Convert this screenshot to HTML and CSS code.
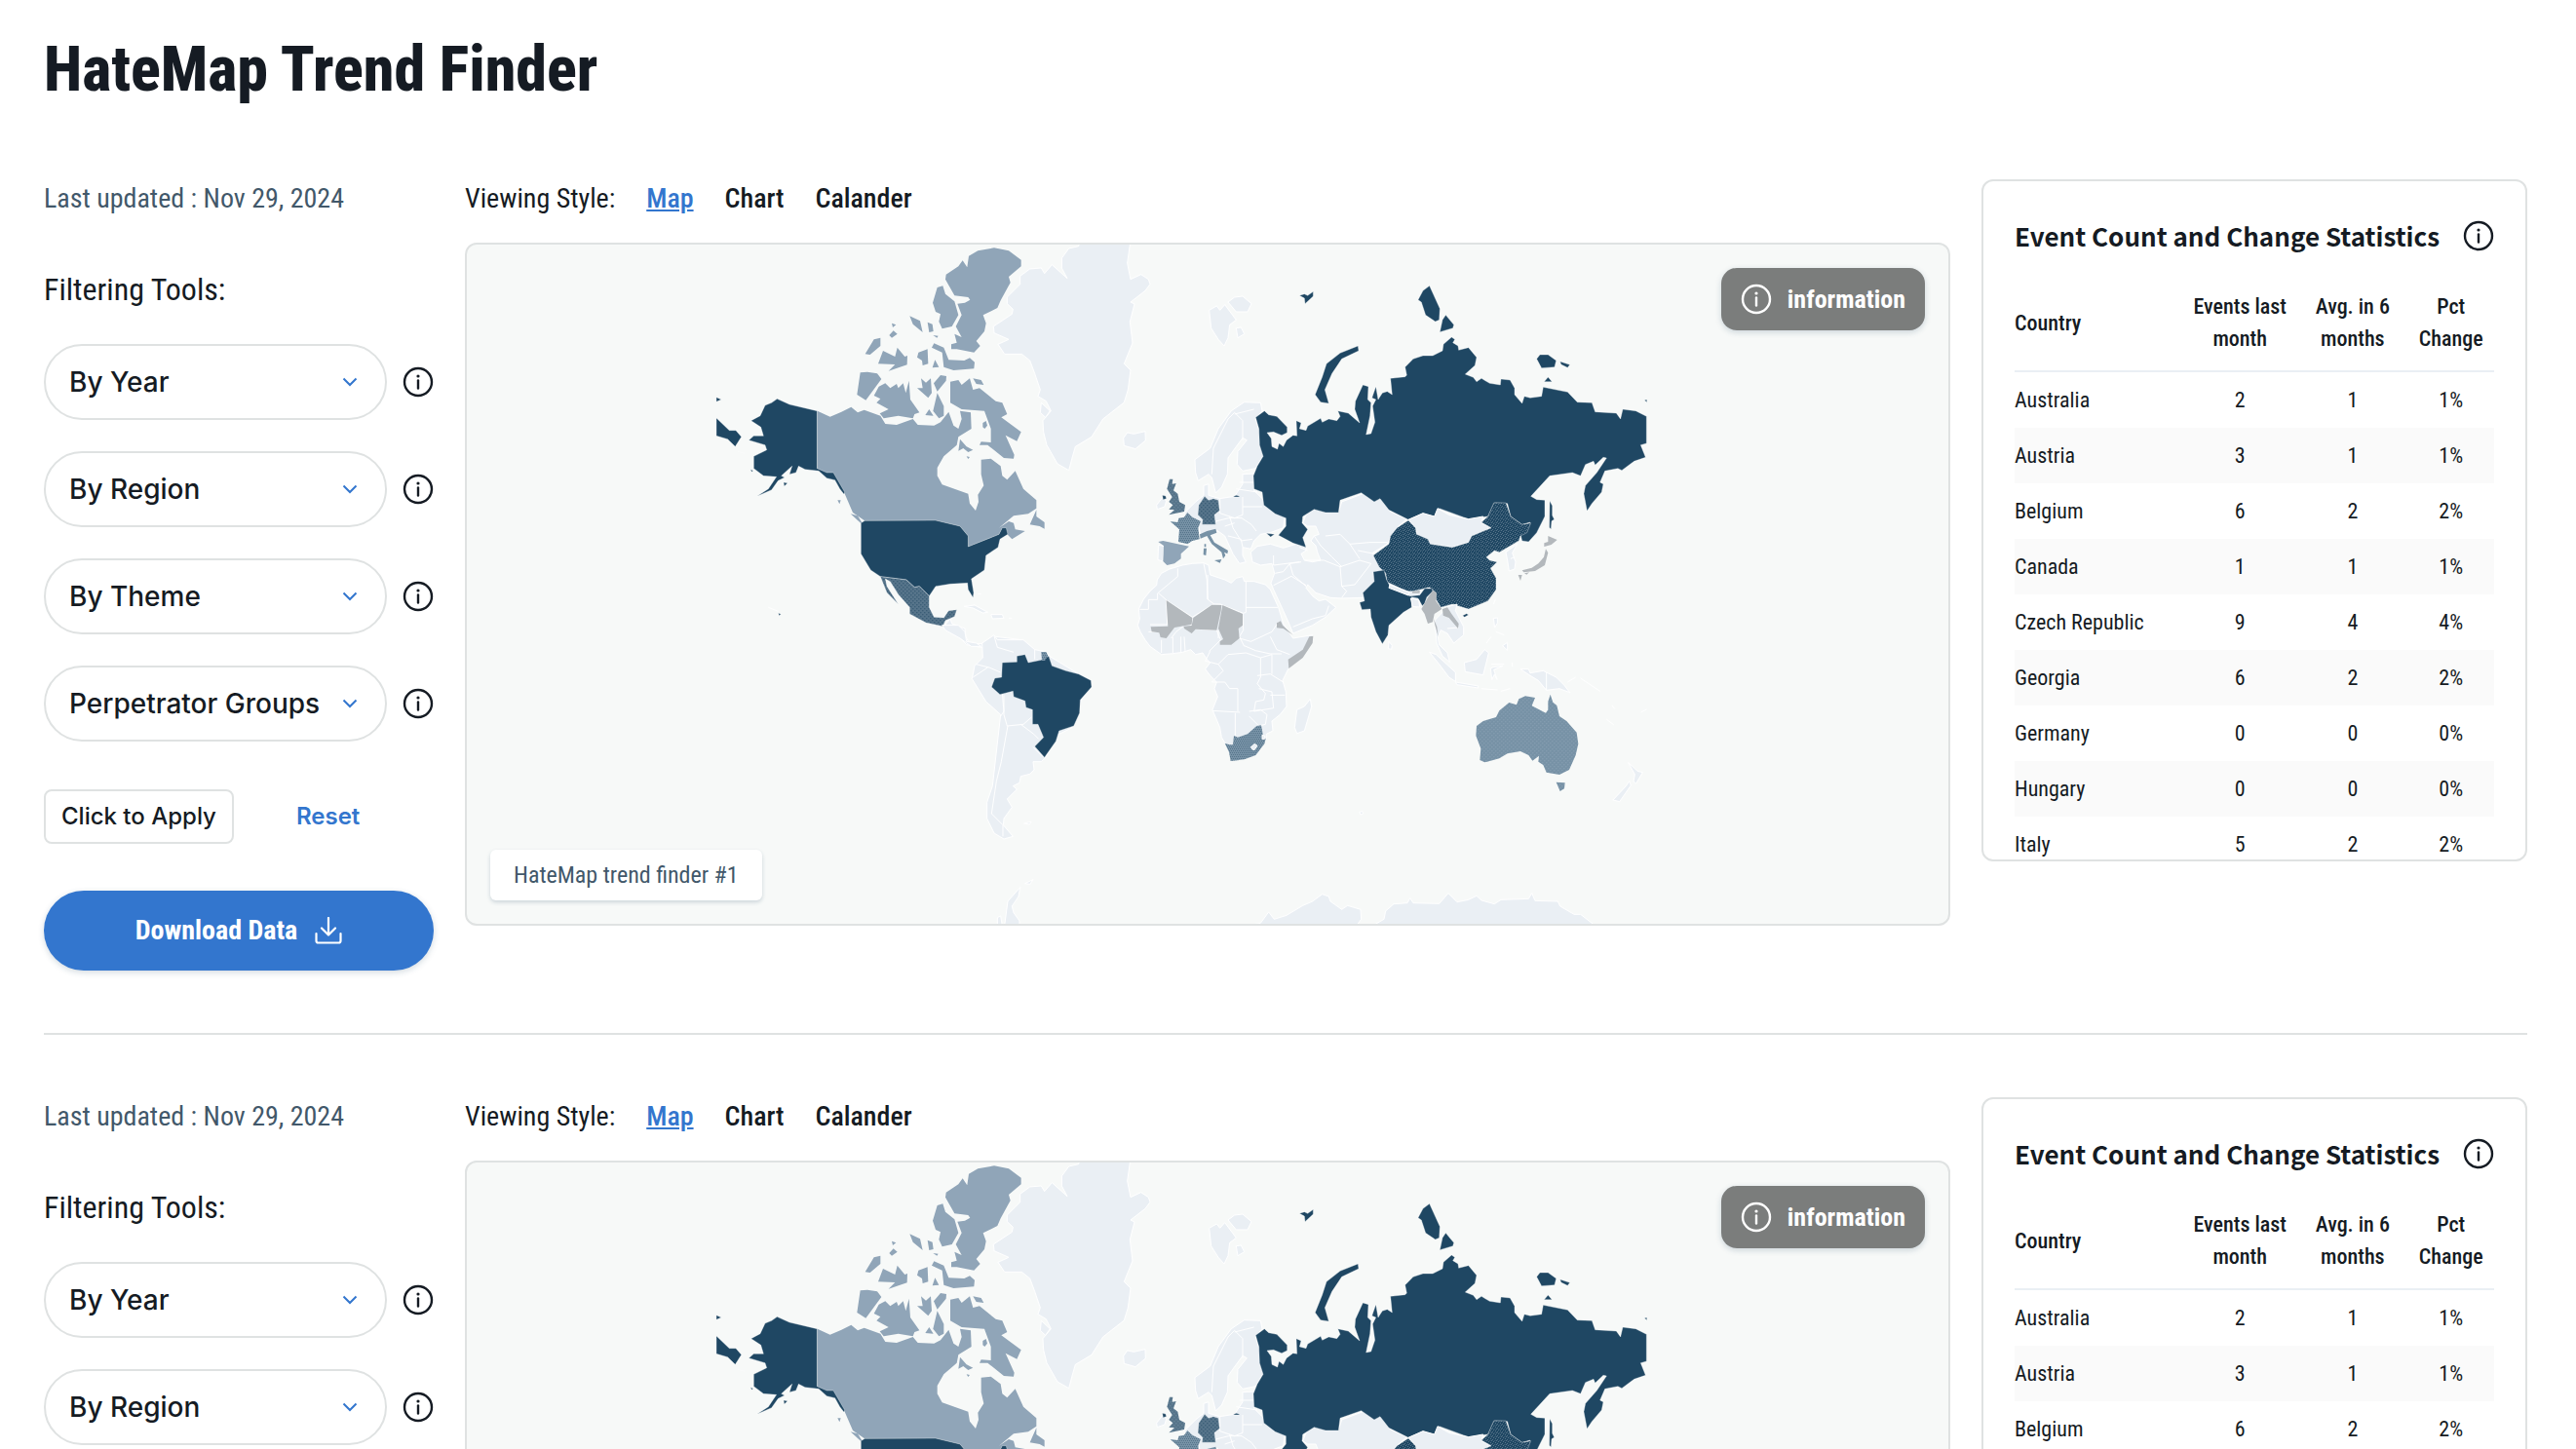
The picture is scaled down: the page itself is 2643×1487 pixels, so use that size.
FILE: index.html
```html
<!DOCTYPE html>
<html lang="en">
<head>
<meta charset="utf-8">
<meta name="viewport" content="width=device-width, initial-scale=1">
<title>HateMap Trend Finder</title>
<link rel="stylesheet" href="styles.css">
</head>
<body>
<svg class="sprite" aria-hidden="true">
  <defs>
    <pattern id="dots-mexico" width="12" height="12" patternUnits="userSpaceOnUse"><rect width="12" height="12" fill="#56748a"/><path d="M1 1h3v3h-3zM7 7h3v3h-3z" fill="#1f4763"/></pattern>
    <pattern id="dots-china" width="15" height="12" patternUnits="userSpaceOnUse"><rect width="15" height="12" fill="#1f4763"/><path d="M0 0h3v3h-3zM6 3h3v3h-3zM12 6h3v3h-3zM3 9h3v3h-3zM10 0h3v2h-3z" fill="#56748a"/></pattern>
    <pattern id="dots-uk" width="12" height="12" patternUnits="userSpaceOnUse"><rect width="12" height="12" fill="#56748a"/><path d="M1 1h3v3h-3zM7 7h3v3h-3z" fill="#7792a6"/></pattern>
    <pattern id="dots-france" width="12" height="12" patternUnits="userSpaceOnUse"><rect width="12" height="12" fill="#7792a6"/><path d="M0 0h3v3h-3zM6 0h3v3h-3zM3 6h3v3h-3zM9 6h3v3h-3z" fill="#56748a"/></pattern>
    <pattern id="dots-australia" width="12" height="12" patternUnits="userSpaceOnUse"><rect width="12" height="12" fill="#7792a6"/><path d="M1 1h3v3h-3zM7 7h3v3h-3z" fill="#90a5b8"/></pattern>
  </defs>
  <symbol id="icon-info" viewBox="0 0 32 32">
    <circle cx="16" cy="16" r="14" fill="none" stroke="currentColor" stroke-width="2.4"/>
    <path d="M16 14.5v8" fill="none" stroke="currentColor" stroke-width="2.4" stroke-linecap="round"/>
    <circle cx="16" cy="10" r="1.6" fill="currentColor"/>
  </symbol>
  <symbol id="icon-chevron" viewBox="0 0 16 10">
    <path d="M1.500 1.500L8 8l6.500-6.500" fill="none" stroke="currentColor" stroke-width="2"/>
  </symbol>
  <symbol id="icon-download" viewBox="0 0 28 28">
    <path d="M14 1v17M7 11.500l7 7 7-7M1.500 17v7.500q0 2 2 2h21q2 0 2-2V17" fill="none" stroke="currentColor" stroke-width="2.200" stroke-linecap="round" stroke-linejoin="round"/>
  </symbol>
  <symbol id="world" viewBox="479 251 1520 697" preserveAspectRatio="xMidYMid slice">
    <!-- Greenland, Canada, United States, Mexico and the Caribbean -->
    <g transform="translate(720 240) scale(.33333)">
      <g class="land">
        <path d="M1165 20L1160 38 1130 45 1108 75 1108 105 1125 137 1078 95 1055 122 1045 105 1010 108 980 130 980 155 940 195 940 215 958 232 955 247 898 285 900 305 945 325 912 340 932 370 985 370 1010 390 1025 430 1042 480 1035 500 1060 515 1075 545 1050 575 1052 610 1062 650 1095 708 1130 728 1140 690 1150 655 1200 625 1235 570 1300 519 1312 480 1320 420 1300 400 1326 336 1318 270 1332 216 1320 210 1365 175 1380 155 1375 140 1352 125 1320 140 1310 90 1320 20z"/>
        <path d="M1045 520L1072 545 1058 565 1042 550z"/>
        <path d="M1298 635L1310 618 1330 622 1365 614 1366 642 1335 668 1300 658z" transform="translate(0 -6)"/>
        <path d="M748 1205L765 1185 770 1200 810 1215 812 1240 825 1262 875 1262 905 1240 985 1250 975 1270 870 1275 815 1265 790 1238 770 1215z"/>
        <path d="M808 1147L840 1143 880 1165 865 1167 835 1152zM890 1172L925 1172 930 1183 895 1185zM850 1108h10M945 1183h10M205 1150l30 12" />
      </g>
      <g class="level-2">
        <path d="M822 68L850 52 900 43 945 52 983 80 983 100 945 132 950 150 920 205 910 228 866 250 875 275 870 300 845 330 857 345 838 365 785 355 768 355 768 340 785 335 778 308 800 318 782 285 800 250 787 215 810 212 826 203 820 195 778 190 750 140 752 125 790 100 803 82 817 103z"/>
        <path d="M725 165L742 160 750 185 778 208 790 250 770 285 740 292 730 270 735 247 720 240 711 212zM640 253L672 268 680 303 650 278zM695 272L710 278 713 300 700 303zM585 275L598 280 588 288zM590 298L602 308 585 320 577 312zM550 320L550 345 518 372 503 370 530 325zM558 360L595 378 602 350 625 378 633 375 632 403 575 422 595 402 543 400zM695 355L697 400 680 405 678 390 663 380 667 365zM715 337L745 350 760 388 808 390 825 382 840 395 838 415 775 420 745 410 740 365 708 350zM718 388L730 410 710 412zM712 312l16 2-4 6zM488 427L510 425 540 430 553 447 505 512 478 495zM565 460L580 475 600 462 605 475 620 460 628 490 638 452 642 510 670 550 655 555 650 568 605 560 560 568 548 553 575 540 538 520 550 508 530 498 545 470zM675 445L690 458 705 445 708 490 697 505 663 475 680 475zM735 435L753 438 752 452 725 485 714 460zM725 490L745 530 745 560 730 568 712 545zM700 540L713 560 688 558zM765 455L790 450 800 465 825 445 835 480 855 475 905 515 925 520 940 555 922 565 983 610 970 638 935 620 962 680 960 692 930 690 880 650 855 650 860 640 890 642 890 600 870 545 800 540 765 520zM835 445L860 450 868 465 845 462zM865 582l10-6 4 14-8 10-6-5zM795 632L815 655 835 665 820 672 805 660 790 668z"/>
        <path d="M356 545L395 563 430 548 460 533 480 550 500 542 550 560 565 585 600 588 650 570 665 588 715 590 735 580 760 548 775 590 790 600 800 570 795 545 828 550 830 600 790 625 785 650 745 685 725 720 725 745 740 772 820 800 825 830 843 852 852 825 850 803 868 775 860 740 860 695 890 692 920 715 925 745 940 757 965 730 990 785 1030 820 1030 845 1005 862 960 868 915 905 945 885 960 890 965 910 995 915 955 940 940 925 925 905 915 925 820 963 820 930 795 900 720 882 500 882 465 858 440 800 400 735 385 748 356 725z"/>
        <path d="M1030 850L1030 870 1055 888 1055 908 1040 900 1010 895zM458 862L480 868 500 900 480 882zM418 820h10l-4 12zM815 685l10 2-5 6z"/>
      </g>
      <g class="level-5">
        <path d="M232 508L270 525 355 545 355 722 385 735 405 735 440 795 438 802 425 785 410 758 385 752 360 730 318 725 298 715 290 735 270 740 278 715 245 745 255 750 235 760 215 788 170 808 205 785 230 748 190 745 160 722 160 685 180 675 200 665 195 650 145 635 160 622 190 622 182 595 152 575 180 560 195 528 215 520zM45 503L60 510 45 517zM45 567L85 605 105 605 122 625 103 655 80 632 45 622zM110 670l22 6M252 765l12 2-10 10zM150 725l8 4-4 4zM236 1168l8 3-6 4z"/>
        <path d="M502 883L720 882 795 900 820 930 820 963 915 925 925 905 937 905 942 925 918 940 912 965 875 990 870 1035 830 1062 837 1105 835 1120 820 1095 818 1075 765 1078 720 1085 700 1115 670 1085 655 1088 630 1065 550 1055 520 1035 490 985 490 890z"/>
      </g>
      <path class="mexico" d="M550 1055L630 1065 655 1088 670 1085 700 1115 700 1150 715 1180 745 1182 760 1160 785 1157 778 1178 750 1190 742 1208 690 1197 640 1170 640 1150 605 1110 580 1070 565 1062 570 1085 605 1140 570 1105z"/>
    </g>
    <!-- South America, with the Antarctic Peninsula below it -->
    <g transform="translate(960 600) scale(.33333)">
      <g class="land">
        <path d="M143 180L180 155 190 170 270 170 305 200 330 205 350 220 440 275 480 295 450 350 420 440 370 465 340 530 325 545 300 545 303 570 290 583 262 590 258 610 238 620 250 630 220 660 235 685 210 720 208 740 238 775 210 783 180 765 158 720 158 670 175 620 200 400 155 360 112 290 120 250 145 225z"/>
        <path d="M20 125L70 125 90 145 95 175 125 180 140 190 110 190 75 165 30 140zM272 735l22-5-5 8zM275 920L300 908 290 922z"/>
        <path d="M190 1050L190 1025 200 1020 205 1050zM212 1050L222 975 260 932 255 960 235 990 240 1010 258 1035 258 1050z"/>
      </g>
      <path class="border" d="M180 158l10 35 50 15M125 245l40 10 35 15M115 285l45-30M205 335l5 55-10 15M210 340v60l10 35 50-5 25-22M222 435l-20 110-15 60-15 100 35 35v35M262 430l40 30 15 15M300 500l30 30M305 200l0 30"/>
      <path class="level-5" d="M205 240L250 238 250 220 275 215 285 240 325 232 348 220 358 250 400 265 440 275 478 295 480 315 445 355 443 395 425 435 380 450 370 482 335 532 305 498 332 470 315 430 298 430 298 385 278 378 275 358 240 345 238 328 198 338 172 315 182 288 203 285z"/>
      <path class="france" d="M325 207h15l6 12-10 15h-9z"/>
    </g>
    <!-- Africa and western Asia -->
    <g transform="translate(1160 480) scale(.33333)">
      <g class="land">
        <path d="M160 300L120 312 95 325 82 345 80 362 60 380 40 405 25 435 28 465 22 485 30 505 45 530 60 550 95 575 130 572 160 568 185 560 200 575 222 570 235 590 245 600 230 620 245 640 265 660 258 680 268 705 252 745 275 800 280 830 292 850 308 870 340 898 400 865 417 835 418 820 438 810 435 780 460 760 480 735 478 690 468 655 485 620 530 570 560 530 560 515 500 525 470 480 455 430 430 375 415 360 380 350 350 350 345 335 325 340 310 355 290 345 245 330 240 300 225 293 190 295z"/>
        <path d="M553 712L557 735 535 810 512 818 505 800 512 745 535 735z"/>
        <path d="M370 260L390 242 430 235 470 247 510 235 540 245 540 255 525 265 535 285 560 290 585 285 575 260 570 240 555 225 565 210 580 205 570 180 545 180 530 170 540 145 570 125 600 138 640 135 650 105 715 80 740 95 770 95 800 135 850 158 820 185 800 215 790 235 745 262 760 290 800 330 850 380 880 380 900 390 880 430 860 400 780 420 715 400 650 402 615 400 570 385 545 360 540 370 560 395 580 410 600 405 632 430 600 460 560 485 500 510 490 485 470 440 440 375 432 355 443 325 435 295 400 300 375 290z"/>
        <path d="M795 535l10 12-2 12-10-2z"/>
      </g>
      <path class="border" d="M145 310v25l-30 25-30 25 25 22M28 436h27v-30h28v-20M110 408l80 52M110 408l3 75H60M190 460l65-40h22l5 3M225 295l10 50 2 60 20 15M237 330v75M282 423l65 25 8-3V350M355 430h98M345 450l2 50-12 20 15 30M190 460l-5 30-25 0-20 15-15 20M185 495l80 5 12 30-35 35M270 500l0 25M130 522v48M155 520v48M165 520l3 45M95 530v40M55 505h50M335 525l35 10 65-30 20-30M430 520l20 40 40 15M350 548l35 15 45 10 35 0M245 565l-15 30 40 10 30-30 55-5 45 15 0 60-10 20 25 30-5 20-25 5-5 30 60-10M270 605l15 20-35 35 40 0 15 20 25 0 0 70M252 748l85 5M322 755v70M365 750l35-5 20 15-5 30-20 5-30-30M390 640l40-5 40 25M400 585l35-10 0 60M430 700l45 0M395 680l40 10 5 50"/>
      <path class="border" d="M445 325l25-5 20-25 35-5M490 295l10 35 40 35M440 362l55-28 45 28M500 490l60-25 40-10 10-30M440 270v30l80-10M535 285l60 0 50 20 5 60 15 15-15 20M645 305l60-20 35 10M650 365l40-5 35-45 15-20M565 210l20 30 35 35 30 30M600 210l45-5 30 30 30 45M675 235l60-5 55 0M700 255l50 10M780 345l10-15M545 255l-25-10"/>
      <path class="inactive" d="M110 408L190 462 188 482 135 492 110 525 92 522 88 508 65 505 62 490 115 488zM193 462L250 422 280 423 278 440 265 500 200 497 188 510 165 495 163 488 188 486zM283 423L345 450 345 485 332 495 335 525 310 545 275 545 275 535 285 528 270 495zM450 478L462 472 468 485 500 515 470 495 450 493zM550 520L562 518 560 540 530 585 487 618 485 590 530 560z"/>
      <path class="france" d="M290 848L305 853 315 853 318 825 330 830 360 820 388 795 402 793 408 825 416 835 412 850 385 885 350 898 308 903 303 875z"/>
      <path class="land" d="M370 860l12-10 8 6-8 12h-6zM405 823l8 2v10l-8 0z"/>
    </g>
    <!-- Europe -->
    <g transform="translate(1160 240) scale(.33333)">
      <g class="land">
        <path d="M345 740L385 738 380 790 405 815 430 840 475 870 470 905 430 920 400 925 380 945 370 970 345 965 345 990 355 1010 335 1015 315 985 290 930 262 910 215 925 208 895 185 880 165 860 200 825 225 805 225 775 240 770 240 805 275 815 320 808 345 770z"/>
        <path d="M198 695L245 660 270 600 310 545 350 518 400 520 405 545 385 570 400 620 410 680 385 722 345 730 328 710 330 670 358 635 345 628 325 655 300 690 298 740 280 780 262 798 250 750 240 740 208 760 200 735z"/>
        <path d="M242 235L265 222 275 235 290 218 325 265 305 280 300 320 288 345 270 325 248 290zM300 210L320 195 345 192 372 215 360 240 325 240zM325 290L340 288 350 308 330 320zM80 835L98 812 110 822 105 840 82 848zM86 958L104 962 98 1008 84 1003z"/>
      </g>
      <path class="border" d="M250 740l5-80 45-90 20-20 25 25v60M320 555l60-15M335 765h45M325 785l65 10M275 815v45l45 15 25-10V810M345 840l60 0M262 885l40-10 40 0 30 20 15 20M305 870l10 35 25 40 35-5M290 900l30-10M300 930l40 10 5 25"/>
      <path class="level-2" d="M85 948L100 945 180 962 155 985 155 1000 135 1015 112 1020 100 1008 102 960z"/>
      <path class="france" d="M122 885L145 888 148 875 165 872 175 858 190 872 216 885 208 905 212 940 190 945 175 955 147 948 150 910z"/>
      <path class="level-3" d="M213 925L235 915 262 908 265 920 245 928 258 950 300 975 298 985 288 980 292 990 285 1000 280 980 250 955 235 930 215 938zM258 1005L280 1002 275 1013zM225 968L234 968 232 990 224 988zM227 955h5v9h-5z"/>
      <path class="uk" d="M120 755L130 755 128 770 140 768 132 790 145 800 150 825 168 835 165 855 118 865 135 850 118 848 130 835 118 825 128 810 112 785z"/>
      <path class="mexico" d="M225 812L228 808 240 820 255 815 270 820 274 852 258 865 262 895 220 895 222 880 207 865 210 835z"/>
      <path class="level-5" d="M98 805l10 2 2 8-10 3zM316 810q10-10 20 0z"/>
    </g>
    <!-- Russia, China, India -->
    <g transform="translate(1260 240) scale(.33333)">
      <path class="level-5" d="M85 565L112 545 125 557 150 562 182 595 182 612 165 620 140 610 120 612 133 630 135 655 152 663 157 645 170 655 180 635 200 620 212 622 210 575 225 582 220 600 240 605 245 592 285 568 290 580 310 570 335 575 345 562 338 545 370 552 405 582 390 540 392 515 415 465 432 470 430 510 440 520 437 560 425 618 440 615 452 580 445 530 455 510 443 505 455 470 462 510 475 490 490 485 505 495 500 445 545 440 550 435 545 410 570 385 600 375 630 375 660 360 663 340 688 318 698 325 692 335 708 345 710 358 740 350 765 380 760 405 730 432 755 442 765 455 780 445 805 460 838 465 840 447 868 450 882 475 882 495 905 522 912 500 930 505 965 500 970 472 1045 487 1075 518 1120 520 1130 548 1195 552 1208 570 1215 540 1255 545 1288 562 1288 645 1270 650 1285 688 1250 700 1212 728 1200 722 1160 730 1145 765 1155 770 1150 795 1120 830 1105 853 1095 800 1100 775 1135 735 1165 690 1155 688 1130 712 1125 700 1100 710 1085 745 1060 735 990 745 932 808 950 818 975 820 975 870 950 920 925 948 905 945 900 925 930 888 905 895 870 870 860 830 820 828 800 870 740 878 650 845 635 870 600 860 555 880 495 850 468 815 450 825 410 797 345 820 340 858 300 858 265 848 230 870 228 890 245 910 230 935 240 965 200 952 155 928 178 900 178 875 145 862 110 835 105 795 80 785 78 745 90 715 108 685 97 650 95 600z"/>
      <path class="level-5" d="M620 160L652 230 650 265 638 270 608 250 595 210 585 203 600 175zM670 250L695 280 692 290 652 302 660 265zM400 345L402 360 350 385 320 430 298 480 310 522 285 518 268 495 290 440 303 400 345 367zM220 190L235 185 245 190 262 178 262 192 237 215 235 198zM950 385L960 372 985 372 1010 390 1005 410 965 413zM1022 393L1052 403 1045 412 1025 402zM973 455l12-14 12 14zM990 822l8 15 0 30 6 12-8 5-2 25-5-5zM118 922l25 3-12 8zM1282 512l7-2v8z"/>
      <path class="land" d="M555 880L600 860 635 870 645 845 680 865 740 878 785 870 780 890 810 905 750 930 740 950 690 965 620 955 580 925 577 905z"/>
      <path class="china" d="M555 882L577 905 580 925 615 940 622 955 690 965 740 950 750 930 810 905 780 888 800 870 818 828 855 828 870 870 905 895 932 890 920 920 900 930 895 945 835 980 820 975 795 995 805 1005 828 1010 808 1030 825 1060 825 1095 800 1130 740 1155 690 1140 655 1150 640 1125 640 1105 620 1088 570 1100 550 1100 490 1072 485 1045 465 1025 447 990 495 955 500 930 520 905z"/>
      <path class="level-5" d="M447 1040L480 1035 488 1065 500 1088 560 1115 590 1112 605 1092 628 1092 630 1100 612 1118 605 1138 598 1145 585 1122 565 1118 565 1150 540 1165 495 1205 492 1235 475 1262 455 1225 440 1180 438 1155 412 1157 405 1135 420 1130 415 1105 450 1070zM722 1175l12-6 6 4-12 7z"/>
      <path class="land" d="M498 1080L558 1103 555 1113 495 1090zM562 1122l25 5 3 22-22-2z"/>
      <path class="inactive" d="M568 1100l22-2 0 8-24 0z"/>
    </g>
    <!-- South-east Asia, Korea and Japan -->
    <g transform="translate(1370 480) scale(.33333)">
      <g class="land">
        <path d="M345 428L375 420 370 440 395 490 395 515 365 540 345 510 325 500 316 520 320 545 345 570 352 598 330 580 312 540 306 470 330 445z"/>
        <path d="M290 568L310 575 370 630 370 658 350 645 320 605zM370 660L440 672 440 678 375 668zM397 600L435 590 460 560 472 570 465 600 455 638 400 628zM478 618l8-4 30-4-28 12 10 30-8-16-8 16zM570 620L595 620 600 632 640 625 680 645 705 670 722 692 690 680 650 685 625 655 600 640zM715 660l25-15M755 648l60 40M450 680l50 4M510 688l28-8M545 600v12M480 605h40M835 775l22 16M852 732l8 10M942 752l16-8M487 464l12-2 0 16-8 14zM495 505l25 10M515 548l15-10 0 24zM465 540l15-20M487 420l6-15M525 260L560 235 545 262 555 290 552 312 535 318 530 285z"/>
      </g>
      <path class="border" d="M650 630v55M345 495l35-3M540 280l12-5"/>
      <path class="inactive" d="M300 378L312 385 310 410 328 435 305 450 300 475 285 480 275 450 265 435 285 400zM303 465l10 25 4 30-10-35zM330 435L345 430 358 450 380 480 378 495 350 462 332 455zM655 210L683 222 665 237 643 243 643 232 655 228zM648 250L655 262 645 300 615 318 580 322 575 316 605 308 625 295 642 275zM563 330l12 0-5 18zM582 325l15-3-8 7z"/>
    </g>
    <!-- Australia, New Zealand and Antarctica -->
    <g transform="translate(1320 660) scale(.33333)">
      <path class="australia" d="M735 163L765 168 755 193 798 215 805 205 805 180 812 158 820 182 832 192 840 225 862 240 893 275 898 310 890 345 870 390 840 405 800 398 790 375 775 365 777 347 757 362 745 345 720 333 680 340 655 355 610 367 595 360 598 325 583 285 585 255 605 240 645 228 655 208 685 183 708 190 715 172zM830 428L857 430 855 448 842 456z"/>
      <g class="land">
        <path d="M1052 368l20 18 8 8 16 4-20 34-8-6 4-22zM1055 425L1060 438 1025 488 1005 483 1045 440zM225 520l8-2 3 7-8 3z"/>
        <path d="M-120 870L-80 862-55 828-38 850 0 838 50 808 80 795 110 773 130 780 135 795 170 820 188 808 228 820 230 850 215 870z"/>
        <path d="M265 870L300 850 305 825 330 803 372 800 380 785 390 800 470 802 498 770 525 797 560 790 585 778 600 792 640 803 660 790 745 787 755 770 765 793 835 795 842 810 885 835 905 835 950 870z"/>
      </g>
    </g>
  </symbol>
</svg>

<main class="page">
  <h1 class="page-title">HateMap Trend Finder</h1>

  <section class="finder">
    <form class="filters">
      <p class="updated">Last updated : Nov 29, 2024</p>
      <h2 class="filters-title">Filtering Tools:</h2>
      <div class="filter-list">
        <div class="filter"><span class="select"><select aria-label="By Year"><option>By Year</option></select><svg class="chevron"><use href="#icon-chevron"/></svg></span><button type="button" class="info" aria-label="About years"><svg><use href="#icon-info"/></svg></button></div>
        <div class="filter"><span class="select"><select aria-label="By Region"><option>By Region</option></select><svg class="chevron"><use href="#icon-chevron"/></svg></span><button type="button" class="info" aria-label="About regions"><svg><use href="#icon-info"/></svg></button></div>
        <div class="filter"><span class="select"><select aria-label="By Theme"><option>By Theme</option></select><svg class="chevron"><use href="#icon-chevron"/></svg></span><button type="button" class="info" aria-label="About themes"><svg><use href="#icon-info"/></svg></button></div>
        <div class="filter"><span class="select"><select aria-label="Perpetrator Groups"><option>Perpetrator Groups</option></select><svg class="chevron"><use href="#icon-chevron"/></svg></span><button type="button" class="info" aria-label="About perpetrator groups"><svg><use href="#icon-info"/></svg></button></div>
      </div>
      <div class="actions"><button type="button" class="apply">Click to Apply</button><button type="reset" class="reset">Reset</button></div>
      <button type="button" class="download">Download Data <svg><use href="#icon-download"/></svg></button>
    </form>

    <div class="viewer">
      <nav class="views"><span>Viewing Style:</span><a class="view active" href="#map">Map</a><a class="view" href="#chart">Chart</a><a class="view" href="#calander">Calander</a></nav>
      <div class="map">
        <svg class="world" role="img" aria-label="World map of events"><use href="#world"/></svg>
        <button type="button" class="map-info"><svg><use href="#icon-info"/></svg>information</button>
        <p class="map-label">HateMap trend finder #1</p>
      </div>
    </div>

    <aside class="stats">
      <header class="stats-head"><h2>Event Count and Change Statistics</h2><button type="button" class="info" aria-label="About the statistics"><svg><use href="#icon-info"/></svg></button></header>
      <table>
        <thead><tr><th class="country">Country</th><th class="events">Events last month</th><th class="average">Avg. in 6 months</th><th class="change">Pct Change</th></tr></thead>
        <tbody>
          <tr><td>Australia</td><td>2</td><td>1</td><td>1%</td></tr>
          <tr><td>Austria</td><td>3</td><td>1</td><td>1%</td></tr>
          <tr><td>Belgium</td><td>6</td><td>2</td><td>2%</td></tr>
          <tr><td>Canada</td><td>1</td><td>1</td><td>1%</td></tr>
          <tr><td>Czech Republic</td><td>9</td><td>4</td><td>4%</td></tr>
          <tr><td>Georgia</td><td>6</td><td>2</td><td>2%</td></tr>
          <tr><td>Germany</td><td>0</td><td>0</td><td>0%</td></tr>
          <tr><td>Hungary</td><td>0</td><td>0</td><td>0%</td></tr>
          <tr><td>Italy</td><td>5</td><td>2</td><td>2%</td></tr>
        </tbody>
      </table>
    </aside>
  </section>

  <section class="finder">
    <form class="filters">
      <p class="updated">Last updated : Nov 29, 2024</p>
      <h2 class="filters-title">Filtering Tools:</h2>
      <div class="filter-list">
        <div class="filter"><span class="select"><select aria-label="By Year"><option>By Year</option></select><svg class="chevron"><use href="#icon-chevron"/></svg></span><button type="button" class="info" aria-label="About years"><svg><use href="#icon-info"/></svg></button></div>
        <div class="filter"><span class="select"><select aria-label="By Region"><option>By Region</option></select><svg class="chevron"><use href="#icon-chevron"/></svg></span><button type="button" class="info" aria-label="About regions"><svg><use href="#icon-info"/></svg></button></div>
      </div>
    </form>

    <div class="viewer">
      <nav class="views"><span>Viewing Style:</span><a class="view active" href="#map">Map</a><a class="view" href="#chart">Chart</a><a class="view" href="#calander">Calander</a></nav>
      <div class="map">
        <svg class="world" role="img" aria-label="World map of events"><use href="#world"/></svg>
        <button type="button" class="map-info"><svg><use href="#icon-info"/></svg>information</button>
      </div>
    </div>

    <aside class="stats">
      <header class="stats-head"><h2>Event Count and Change Statistics</h2><button type="button" class="info" aria-label="About the statistics"><svg><use href="#icon-info"/></svg></button></header>
      <table>
        <thead><tr><th class="country">Country</th><th class="events">Events last month</th><th class="average">Avg. in 6 months</th><th class="change">Pct Change</th></tr></thead>
        <tbody>
          <tr><td>Australia</td><td>2</td><td>1</td><td>1%</td></tr>
          <tr><td>Austria</td><td>3</td><td>1</td><td>1%</td></tr>
          <tr><td>Belgium</td><td>6</td><td>2</td><td>2%</td></tr>
          <tr><td>Canada</td><td>1</td><td>1</td><td>1%</td></tr>
        </tbody>
      </table>
    </aside>
  </section>
</main>
</body>
</html>
```
FILE: styles.css
```css
:root {
  --ink: #151b23;
  --muted: #42586a;
  --blue: #3376ce;
  --line: #dfe2e2;
  --condensed: "Roboto Condensed", "Liberation Sans Narrow", Roboto, sans-serif;
}

* { box-sizing: border-box; }

body {
  margin: 0;
  background: #fff;
  color: var(--ink);
  font: 28px/40px var(--condensed);
}

h1, h2, p { margin: 0; }

button, select {
  border: 0;
  background: none;
  color: inherit;
  font: inherit;
  padding: 0;
  cursor: pointer;
}

.sprite { position: absolute; width: 0; height: 0; }

.page {
  height: 100vh;
  overflow: hidden;
  padding: 34px 50px 0 45px;
}

.page-title {
  font-size: 64px;
  line-height: 76px;
  font-weight: 800;
  margin-bottom: 74px;
}

.finder {
  display: grid;
  grid-template-columns: 400px minmax(0, 1fr) 560px;
  gap: 32px;
  align-items: start;
}

.finder + .finder {
  margin-top: 64px;
  border-top: 2px solid var(--line);
  padding-top: 64px;
}

/* Filters */
.updated { color: var(--muted); }

.filters-title {
  margin-top: 51px;
  font-size: 32px;
  line-height: 44px;
  font-weight: 400;
}

.filter-list {
  display: flex;
  flex-direction: column;
  gap: 32px;
  margin-top: 34px;
}

.filter {
  display: flex;
  align-items: center;
  justify-content: space-between;
}

.select {
  display: grid;
  grid-template-columns: 352px;
  align-items: center;
}

.select select {
  grid-area: 1 / 1;
  height: 78px;
  padding: 0 24px;
  border: 2px solid var(--line);
  border-radius: 39px;
  appearance: none;
  font: 500 28px/36px Inter, sans-serif;
}

.chevron {
  grid-area: 1 / 1;
  justify-self: end;
  width: 16px;
  height: 10px;
  margin-right: 30px;
  color: var(--blue);
  pointer-events: none;
}

.info, .info svg {
  display: block;
  width: 32px;
  height: 32px;
}

.actions {
  display: flex;
  align-items: center;
  gap: 64px;
  margin-top: 49px;
}

.apply, .reset { font: 500 24px/36px Inter, sans-serif; }

.apply {
  height: 56px;
  padding: 0 16px;
  border: 2px solid var(--line);
  border-radius: 8px;
}

.reset { color: var(--blue); font-weight: 600; }

.download {
  display: flex;
  align-items: center;
  justify-content: center;
  gap: 18px;
  width: 100%;
  height: 82px;
  margin-top: 48px;
  border-radius: 41px;
  background: var(--blue);
  color: #fff;
  font-weight: 700;
  box-shadow: 0 2px 6px #1f476333;
}

.download svg { width: 28px; height: 28px; }

/* Map */
.views { display: flex; gap: 32px; }
.view { color: inherit; font-weight: 500; text-decoration: none; }
.view.active { color: var(--blue); text-decoration: underline; }

.map {
  position: relative;
  height: 701px;
  margin-top: 25px;
  border: 2px solid var(--line);
  border-radius: 12px;
  background: #f7f9f8;
  overflow: hidden;
}

.world { display: block; width: 100%; height: 100%; }

.land { fill: #eaeff4; stroke: #fff; stroke-width: 3; stroke-linejoin: round; }
.border { fill: none; stroke: #fff; stroke-width: 3; stroke-linejoin: round; }
.level-2 { fill: #90a5b8; }
.level-3 { fill: #7792a6; }
.level-5 { fill: #1f4763; }
.inactive { fill: #b3b8bc; }
.mexico { fill: url(#dots-mexico); }
.china { fill: url(#dots-china); }
.uk { fill: url(#dots-uk); }
.france { fill: url(#dots-france); }
.australia { fill: url(#dots-australia); }
.level-5, .mexico, .china { stroke: #fff; stroke-width: 1; }

.map-info {
  position: absolute;
  top: 24px;
  right: 24px;
  display: flex;
  align-items: center;
  gap: 16px;
  height: 64px;
  padding: 0 20px;
  border-radius: 16px;
  background: #7b7d7c;
  color: #fff;
  font-size: 26px;
  font-weight: 700;
  box-shadow: 0 2px 6px #1f476333;
}

.map-info svg { width: 32px; height: 32px; }

.map-label {
  position: absolute;
  bottom: 24px;
  left: 24px;
  padding: 6px 24px;
  border-radius: 6px;
  background: #fff;
  color: var(--muted);
  font-size: 24px;
  box-shadow: 0 2px 4px #1f476333;
}

/* Statistics */
.stats {
  max-height: 700px;
  padding: 32px;
  border: 2px solid var(--line);
  border-radius: 12px;
  overflow: hidden;
}

.stats-head {
  display: flex;
  align-items: center;
  justify-content: space-between;
  height: 48px;
}

.stats-head h2 {
  font: 700 26px/40px "Noto Sans CJK SC", "Noto Sans", sans-serif;
  white-space: nowrap;
}

table {
  width: 100%;
  margin-top: 24px;
  border-collapse: collapse;
  table-layout: fixed;
  font-size: 22px;
  line-height: 33px;
}

th, td { padding: 12px 0; text-align: center; font-weight: 400; }
th { padding: 8px 8px 16px; font-weight: 500; }
thead tr { border-bottom: 2px solid #eaeff4; }
th:first-child, td:first-child { padding-left: 0; text-align: left; }
tbody tr:nth-child(even) { background: #fafafa; }

.country { width: 35%; }
.events { width: 24%; }
.average { width: 23%; }
.change { width: 18%; }
```
